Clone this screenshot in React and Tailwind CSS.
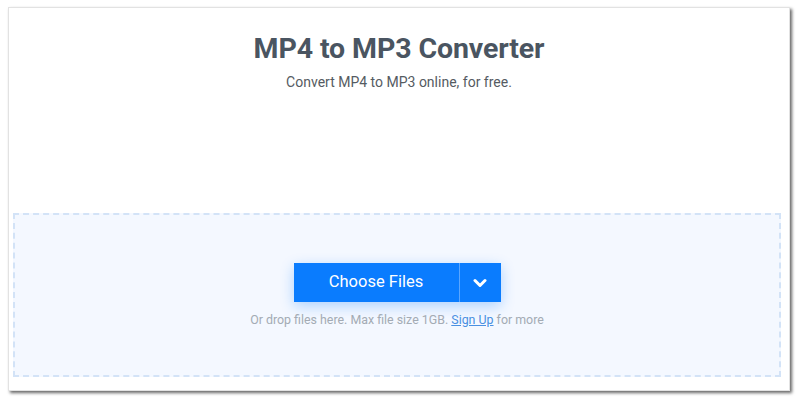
export default function App() {
  return (
    <div className="w-[800px] h-[402px] bg-white overflow-hidden" style={{ fontFamily: "Roboto, 'Liberation Sans', sans-serif" }}>
      <div className="ml-[8px] mt-[7px] w-[782px] h-[384px] bg-white border border-[#e2e2e2] shadow-[2px_2px_3px_rgba(0,0,0,0.6)] flex flex-col">
        <div className="flex flex-col items-center pt-[24px]">
          <h1 className="text-[28.5px] leading-[34px] font-bold text-[#4a5561] tracking-[-0.1px]">MP4 to MP3 Converter</h1>
          <p className="mt-[6px] text-[14px] leading-[20px] text-[#555b62]">Convert MP4 to MP3 online, for free.</p>
        </div>
        <div className="mt-auto mb-[13px] ml-[4px] mr-[8px] h-[164px] border-2 border-dashed border-[#d3e3f7] bg-[#f4f8ff] flex flex-col items-center pt-[48px]">
          <div className="flex h-[39px] bg-[#0a7cfe] shadow-[0_4px_14px_rgba(10,124,254,0.3)]">
            <div className="w-[166px] flex items-center justify-center text-white text-[16.5px] border-r border-[#5aa6ff]">Choose Files</div>
            <div className="w-[41px] flex items-center justify-center">
              <svg width="14" height="10" viewBox="0 0 14 10" fill="none">
                <path d="M2 2.5 L7 7.5 L12 2.5" stroke="white" strokeWidth="3" strokeLinecap="round" strokeLinejoin="round" />
              </svg>
            </div>
          </div>
          <p className="mt-[9px] text-[12.4px] leading-[18px] text-[#a3abb4]">
            Or drop files here. Max file size 1GB. <a className="text-[#4a90e2] underline">Sign Up</a> for more
          </p>
        </div>
      </div>
    </div>
  );
}
